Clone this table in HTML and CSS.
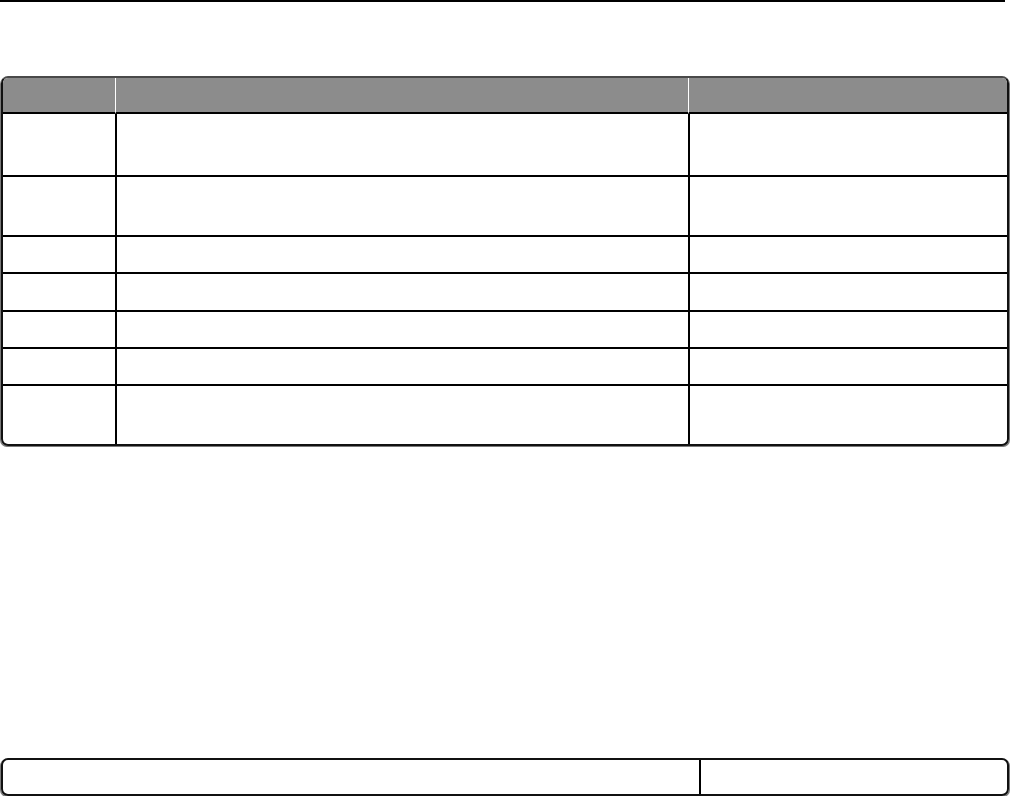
FILE: index.html
```html
<!DOCTYPE html>
<html lang="en">
<head>
<meta charset="utf-8">
<title>Table</title>
<link rel="stylesheet" href="styles.css">
</head>
<body>
<div class="rule"></div>
<div class="tbl main">
  <div class="c h"></div><div class="c h"></div><div class="c h"></div>
  <div class="c r1"></div><div class="c r1"></div><div class="c r1"></div>
  <div class="c r2"></div><div class="c r2"></div><div class="c r2"></div>
  <div class="c r3"></div><div class="c r3"></div><div class="c r3"></div>
  <div class="c r4"></div><div class="c r4"></div><div class="c r4"></div>
  <div class="c r5"></div><div class="c r5"></div><div class="c r5"></div>
  <div class="c r6"></div><div class="c r6"></div><div class="c r6"></div>
  <div class="c r7 last"></div><div class="c r7 last"></div><div class="c r7 last"></div>
</div>
<div class="tbl foot">
  <div class="c fr last"></div><div class="c fr last"></div>
</div>
</body>
</html>
```
FILE: styles.css
```css
html, body {
  margin: 0;
  padding: 0;
  background: #fff;
  font-family: "Liberation Sans", Arial, sans-serif;
}
.rule {
  width: 1005px;
  height: 2px;
  background: #000;
}
.tbl {
  box-sizing: border-box;
  width: 1008px;
  margin-left: 1px;
  border: 2px solid #111;
  border-radius: 7px;
  overflow: hidden;
  display: grid;
  box-shadow: -1px 1px 0 #7a7a7a, 1px 1px 0 #7a7a7a;
}
.main {
  margin-top: 74px;
  grid-template-columns: 112px 573px 1fr;
  border-top-color: #4a4a4a;
}
.c {
  box-sizing: border-box;
  border-bottom: 2px solid #000;
}
.c:not(:nth-child(3n+1)) {
  border-left: 2px solid #000;
}
.c.last { border-bottom: none; }
.h {
  background: #8c8c8c;
  height: 36px;
}
.main .h:not(:first-child) {
  border-left: 1px solid #fff;
  padding-left: 1px;
}
.r1 { height: 63px; }
.r2 { height: 60px; }
.r3 { height: 37px; }
.r4 { height: 38px; }
.r5 { height: 37px; }
.r6 { height: 37px; }
.r7 { height: 58px; }
.foot {
  margin-top: 312px;
  height: 38px;
  grid-template-columns: 696px 1fr;
}
.foot .c:nth-child(2) {
  border-left: 2px solid #000;
}
.fr { height: 34px; }
```
